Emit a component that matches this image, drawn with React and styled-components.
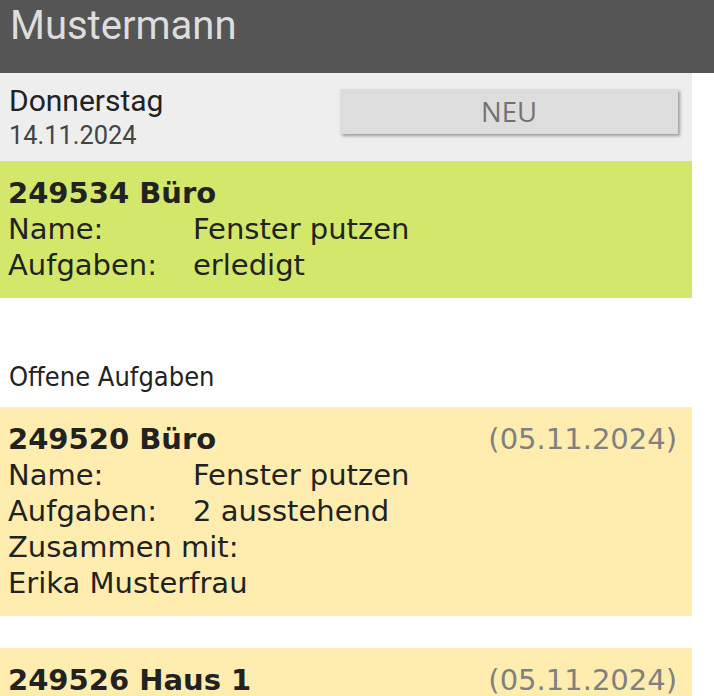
import React from "react";
import styled, { createGlobalStyle } from "styled-components";

const Global = createGlobalStyle`
  html, body { margin: 0; padding: 0; background: #fff; }
  body { font-family: "DejaVu Sans", sans-serif; color: #222; }
`;

const Header = styled.header`
  height: 73px;
  background: #555;
  color: #ddd;
  font-family: Roboto, sans-serif;
  font-size: 40px;
  line-height: 52px;
  padding-left: 10px;
  box-sizing: border-box;
`;

const Main = styled.main`
  width: 692px;
`;

const DayBar = styled.div`
  background: #eee;
  display: flex;
  justify-content: space-between;
  align-items: flex-start;
  padding: 11px 14px 8px 9px;
`;

const DayInfo = styled.div`
  font-family: Roboto, sans-serif;
`;

const DayName = styled.div`
  font-size: 30px;
  line-height: 34px;
  color: #222;
`;

const DayDate = styled.div`
  font-size: 25.4px;
  line-height: 35px;
  color: #444;
`;

const NewButton = styled.button`
  width: 338px;
  height: 45px;
  margin-top: 5px;
  border: none;
  background: #ddd;
  color: #737373;
  font-family: "Open Sans", sans-serif;
  font-size: 27.5px;
  box-shadow: 2px 2px 3px rgba(0, 0, 0, 0.35);
  padding: 0;
`;

const Card = styled.div`
  background: ${(p) => (p.$done ? "#d3e76b" : "#ffedb0")};
  padding: 14px 15px 15px 8px;
  margin-bottom: 32px;
  font-size: 29px;
  line-height: 36px;
`;

const CardHead = styled.div`
  display: flex;
  justify-content: space-between;
`;

const Title = styled.div`
  font-weight: bold;
`;

const Due = styled.div`
  color: #808080;
`;

const Row = styled.div`
  display: flex;
`;

const Label = styled.div`
  width: 185px;
  flex: none;
`;

const SectionTitle = styled.h2`
  margin: 0 0 14px;
  padding: 31px 0 0 9px;
  font-family: "DejaVu Sans Condensed", "DejaVu Sans", sans-serif;
  font-stretch: condensed;
  font-weight: normal;
  font-size: 27px;
  line-height: 32px;
  color: #222;
`;

const TaskCard = ({ done, title, due, name, tasks, partner }) => (
  <Card $done={done}>
    <CardHead>
      <Title>{title}</Title>
      {due && <Due>{due}</Due>}
    </CardHead>
    <Row>
      <Label>Name:</Label>
      <div>{name}</div>
    </Row>
    <Row>
      <Label>Aufgaben:</Label>
      <div>{tasks}</div>
    </Row>
    {partner && (
      <>
        <div>Zusammen mit:</div>
        <div>{partner}</div>
      </>
    )}
  </Card>
);

export default function App() {
  return (
    <>
      <Global />
      <Header>Mustermann</Header>
      <Main>
        <DayBar>
          <DayInfo>
            <DayName>Donnerstag</DayName>
            <DayDate>14.11.2024</DayDate>
          </DayInfo>
          <NewButton>NEU</NewButton>
        </DayBar>
        <TaskCard done title="249534 Büro" name="Fenster putzen" tasks="erledigt" />
        <SectionTitle>Offene Aufgaben</SectionTitle>
        <TaskCard
          title="249520 Büro"
          due="(05.11.2024)"
          name="Fenster putzen"
          tasks="2 ausstehend"
          partner="Erika Musterfrau"
        />
        <TaskCard
          title="249526 Haus 1"
          due="(05.11.2024)"
          name="Fenster putzen"
          tasks="1 ausstehend"
        />
      </Main>
    </>
  );
}
